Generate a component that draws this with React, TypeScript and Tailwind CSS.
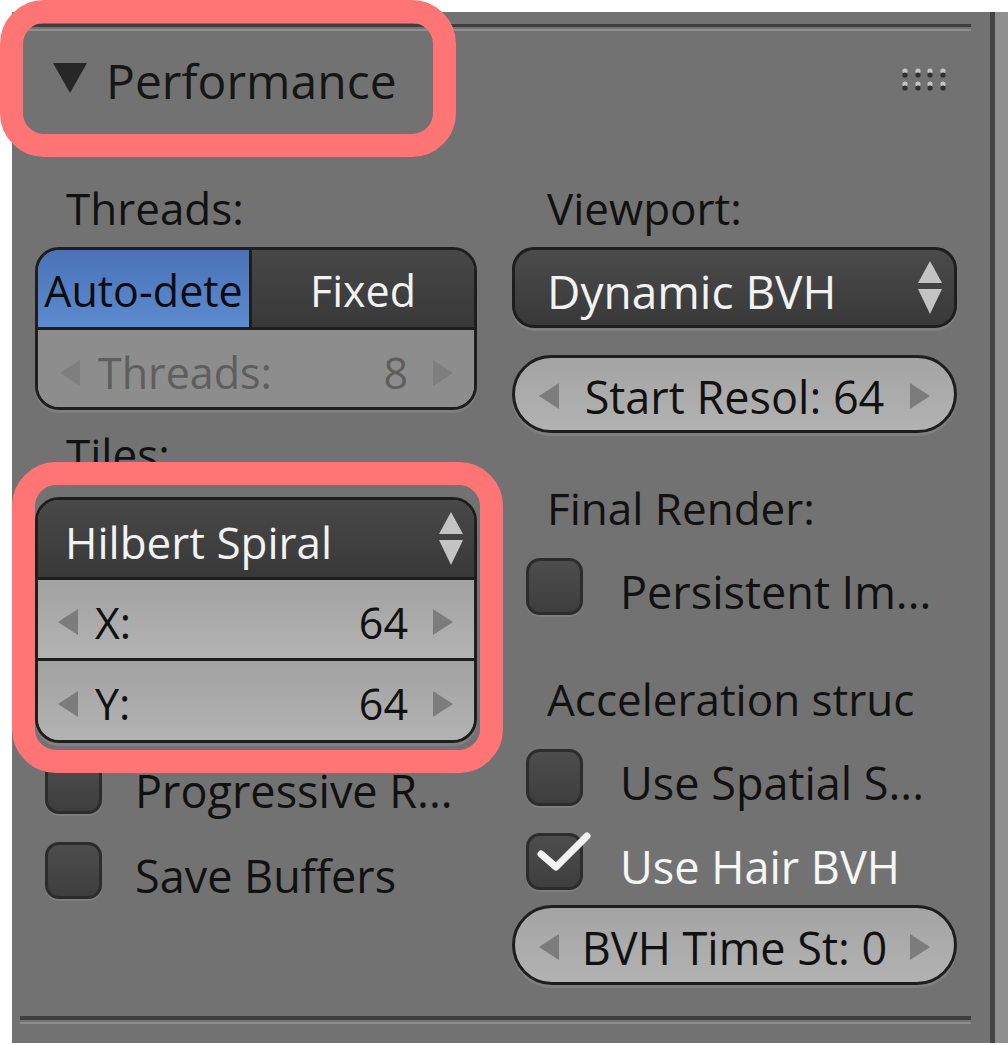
import React from 'react'

const LINE = 'border-[#1e1e1e]'

function Arrow({ dir, color = '#7c7c7c' }: { dir: 'l' | 'r'; color?: string }) {
  return (
    <svg width="20" height="26" viewBox="0 0 20 26" className="shrink-0">
      <polygon points={dir === 'l' ? '20,0 0,13 20,26' : '0,0 20,13 0,26'} fill={color} />
    </svg>
  )
}

function UpDown() {
  return (
    <svg width="24" height="54" viewBox="0 0 24 54" className="shrink-0">
      <polygon points="12,0 24,22 0,22" fill="#c4c4c4" />
      <polygon points="0,28 24,28 12,53" fill="#c4c4c4" />
    </svg>
  )
}

function Label({ text, h, mt = 0, pl = 31 }: { text: string; h: number; mt?: number; pl?: number }) {
  return (
    <div className="flex items-center text-[44px] leading-none text-[#111]" style={{ height: h, marginTop: mt, paddingLeft: pl }}>
      {text}
    </div>
  )
}

function NumRow({ label, value, className = '' }: { label: string; value: string; className?: string }) {
  return (
    <div className={`flex items-center pl-[20px] pr-[21px] pt-[6px] text-[43px] leading-none text-[#111] bg-linear-to-b from-[#a2a2a2] to-[#b3b3b3] ${className}`}>
      <Arrow dir="l" />
      <span className="ml-[17px]">{label}</span>
      <span className="ml-auto">{value}</span>
      <span className="ml-[25px]"><Arrow dir="r" /></span>
    </div>
  )
}

function Pill({ text, h }: { text: string; h: number }) {
  return (
    <div
      className={`flex items-center px-[24px] pt-[4px] rounded-full border-[3px] ${LINE} bg-linear-to-b from-[#a4a4a4] to-[#b2b2b2] text-[45px] leading-none text-[#111] shadow-[0_3px_0_#808080]`}
      style={{ height: h }}
    >
      <Arrow dir="l" />
      <span className="flex-1 text-center">{text}</span>
      <Arrow dir="r" />
    </div>
  )
}

function Check({ text, checked = false, h, mt = 0, pad = 10, gap = 33 }: { text: string; checked?: boolean; h: number; mt?: number; pad?: number; gap?: number }) {
  return (
    <div className="flex items-center" style={{ height: h, marginTop: mt, paddingLeft: pad }}>
      <div className="relative w-[57px] h-[57px] shrink-0 rounded-[14px] border-[3px] border-[#2c2c2c] bg-linear-to-b from-[#4d4d4d] to-[#3e3e3e] shadow-[0_2px_0_#7e7e7e]">
        {checked && (
          <svg width="60" height="50" viewBox="0 0 60 50" className="absolute left-[6px] top-[-2px] overflow-visible">
            <polyline points="6,20 21,33 52,2" fill="none" stroke="#f2f2f2" strokeWidth="7" strokeLinecap="round" strokeLinejoin="round" />
          </svg>
        )}
      </div>
      <span className={`pt-[10px] text-[45px] leading-none ${checked ? 'text-[#f6f6f6]' : 'text-[#111]'}`} style={{ marginLeft: gap }}>
        {text}
      </span>
    </div>
  )
}

function Dots() {
  const xs = [3, 16, 28, 41]
  return (
    <svg width="46" height="24" viewBox="0 0 46 24">
      {[0, 13].map((y) =>
        xs.map((x) => (
          <g key={`${x}-${y}`}>
            <circle cx={x} cy={y + 4} r="2.6" fill="#c4c4c4" />
            <circle cx={x} cy={y + 8} r="2.6" fill="#303030" />
          </g>
        ))
      )}
    </svg>
  )
}

export default function App() {
  return (
    <div className="relative w-[1008px] h-[1045px] bg-white overflow-hidden font-['Open_Sans',sans-serif]">
      <div className="flex pt-[12px] pl-[12px]">
        <div className="w-[978px] h-[1031px] bg-[#727272] flex flex-col">
          <div className="ml-[8px] mt-[12px] w-[951px] h-[3px] bg-[#3e3e3e]" />
          <div className="ml-[8px] mt-[2px] w-[951px] h-[2px] bg-[#8e8e8e]" />

          {/* header */}
          <div className="flex items-center h-[99px]">
            <svg width="34" height="30" viewBox="0 0 34 30" className="ml-[41px] mt-[-6px]">
              <polygon points="0,0 34,0 17,30" fill="#272727" />
            </svg>
            <span className="ml-[19px] text-[48px] leading-none text-[#161616]">Performance</span>
            <div className="ml-auto mr-[42px] mt-[-4px]">
              <Dots />
            </div>
          </div>

          <div className="flex mt-[38px] ml-[23px] gap-[35px]">
            {/* left column */}
            <div className="w-[442px] flex flex-col">
              <Label text="Threads:" h={79} />
              <div className={`rounded-[24px] border-[3px] ${LINE} overflow-hidden shadow-[0_3px_0_#808080]`}>
                <div className={`flex h-[80px] border-b-[3px] ${LINE} text-[43px] leading-none`}>
                  <div className={`w-[214px] flex items-center justify-center pt-[4px] border-r-[3px] ${LINE} bg-linear-to-b from-[#4a73b7] to-[#5d8ad0] text-[#0c0c0c]`}>
                    Auto-dete
                  </div>
                  <div className="flex-1 flex items-center justify-center pt-[4px] bg-linear-to-b from-[#474747] to-[#393939] text-[#f2f2f2]">
                    Fixed
                  </div>
                </div>
                <div className="h-[77px] flex items-center pl-[22px] pr-[21px] pt-[8px] bg-[#8d8d8d] text-[43px] leading-none text-[#5e5e5e]">
                  <Arrow dir="l" color="#7e7e7e" />
                  <span className="ml-[18px]">Threads:</span>
                  <span className="ml-auto">8</span>
                  <span className="ml-[25px]"><Arrow dir="r" color="#7e7e7e" /></span>
                </div>
              </div>

              <Label text="Tiles:" h={87} />
              <div className={`rounded-[24px] border-[3px] ${LINE} overflow-hidden shadow-[0_3px_0_#808080]`}>
                <div className={`h-[80px] flex items-center pl-[27px] pr-[11px] pt-[6px] border-b-[3px] ${LINE} bg-linear-to-b from-[#484848] to-[#393939] text-[44px] leading-none text-[#f2f2f2]`}>
                  <span>Hilbert Spiral</span>
                  <span className="ml-auto mt-[-6px]"><UpDown /></span>
                </div>
                <NumRow label="X:" value="64" className={`h-[81px] border-b-[3px] ${LINE}`} />
                <NumRow label="Y:" value="64" className="h-[79px]" />
              </div>

              <Check text="Progressive R..." h={85} />
              <Check text="Save Buffers" h={84} />
            </div>

            {/* right column */}
            <div className="w-[445px] flex flex-col">
              <Label text="Viewport:" h={79} pl={35} />
              <div className={`h-[81px] flex items-center pl-[32px] pr-[12px] pt-[6px] rounded-[22px] border-[3px] ${LINE} bg-linear-to-b from-[#4b4b4b] to-[#393939] text-[46px] leading-none text-[#f2f2f2] shadow-[0_3px_0_#808080]`}>
                <span>Dynamic BVH</span>
                <span className="ml-auto mt-[-6px]"><UpDown /></span>
              </div>
              <div className="mt-[27px]">
                <Pill text="Start Resol: 64" h={78} />
              </div>
              <Label text="Final Render:" h={75} mt={37} pl={35} />
              <Check text="Persistent Im..." h={83} pad={14} gap={37} />
              <Label text="Acceleration struc" h={70} mt={36} pl={35} />
              <Check text="Use Spatial S..." h={87} pad={14} gap={37} />
              <Check text="Use Hair BVH" checked h={80} pad={14} gap={37} />
              <div className="mt-[4px]">
                <Pill text="BVH Time St: 0" h={80} />
              </div>
            </div>
          </div>

          <div className="mt-auto ml-[8px] w-[951px] h-[4px] bg-[#3e3e3e]" />
          <div className="ml-[8px] mt-[2px] w-[951px] h-[2px] bg-[#8e8e8e] mb-[19px]" />
        </div>
        <div className="w-[5px] h-[1031px] bg-[#454545]" />
        <div className="w-[13px] h-[1031px] bg-[#8f8f8f]" />
      </div>

      {/* annotation highlights */}
      <div className="absolute left-0 top-0 w-[456px] h-[157px] rounded-[44px] border-[23px] border-[#ff7575]" />
      <div className="absolute left-[12px] top-[462px] w-[491px] h-[311px] rounded-[44px] border-[23px] border-[#ff7575]" />
    </div>
  )
}
